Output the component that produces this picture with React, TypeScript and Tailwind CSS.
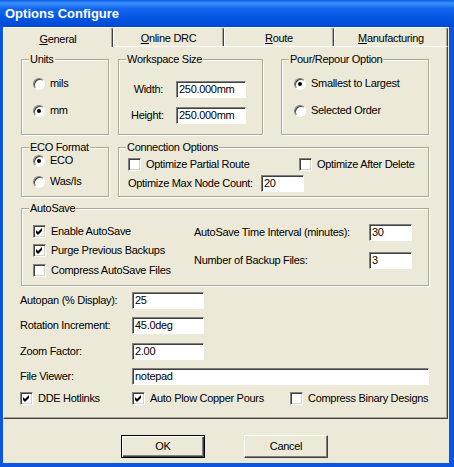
import type { ReactNode } from 'react';

const BG = 'bg-[#ECE9D8]';

function GroupBox({ label, className, inner, children }: { label: string; className: string; inner?: string; children?: ReactNode }) {
  return (
    <div className={`border border-[#aca899] shadow-[inset_1px_1px_0_#fff,1px_1px_0_#fff] ${className}`}>
      <span className={`-mt-[7px] ml-[7px] block w-fit px-[1px] leading-[13px] ${BG}`}>{label}</span>
      <div className={inner}>{children}</div>
    </div>
  );
}

function Radio({ checked }: { checked?: boolean }) {
  return (
    <span className="flex h-[12px] w-[12px] shrink-0 items-center justify-center rounded-full border border-b-[#fff] border-l-[#808080] border-r-[#fff] border-t-[#808080] bg-white shadow-[inset_1px_1px_0_#404040]">
      {checked && <span className="h-[4px] w-[4px] rounded-full bg-black" />}
    </span>
  );
}

function Check({ checked }: { checked?: boolean }) {
  return (
    <span className="flex h-[13px] w-[13px] shrink-0 items-center justify-center border border-b-white border-l-[#808080] border-r-white border-t-[#808080] bg-white shadow-[inset_1px_1px_0_#404040,inset_-1px_-1px_0_#d4d0c8]">
      {checked && (
        <svg width="7" height="7" viewBox="0 0 7 7">
          <path d="M0 2 L2 4 L6 0 L6 3 L2 7 L0 5 Z" fill="#000" />
        </svg>
      )}
    </span>
  );
}

function Field({ value, className }: { value: string; className: string }) {
  return (
    <div
      className={`flex h-[17px] items-center border border-b-white border-l-[#808080] border-r-white border-t-[#808080] bg-white pl-[2px] shadow-[inset_1px_1px_0_#404040] ${className}`}
    >
      {value}
    </div>
  );
}

function RadioRow({ label, checked, className }: { label: string; checked?: boolean; className: string }) {
  return (
    <div className={`flex h-[13px] items-center gap-[5px] ${className}`}>
      <Radio checked={checked} />
      <span>{label}</span>
    </div>
  );
}

function CheckRow({ label, checked, className }: { label: string; checked?: boolean; className?: string }) {
  return (
    <div className={`flex h-[13px] items-center gap-[5px] ${className ?? ''}`}>
      <Check checked={checked} />
      <span className="whitespace-nowrap">{label}</span>
    </div>
  );
}

function Tab({ label, rest, width, active }: { label: string; rest: string; width: string; active?: boolean }) {
  return (
    <div
      className={`flex items-center justify-center rounded-t-[3px] border-l border-r border-t border-l-white border-r-[#404040] border-t-white pt-[3px] shadow-[inset_-1px_0_0_#aca899] ${width} ${
        active ? `relative z-10 -mb-[1px] h-[20px] ${BG}` : `h-[19px] ${BG}`
      }`}
    >
      <span>
        <span className="underline">{label}</span>
        {rest}
      </span>
    </div>
  );
}

function Button({ label, primary }: { label: string; primary?: boolean }) {
  return (
    <div
      className={`flex h-[23px] w-[84px] items-center justify-center border ${BG} ${
        primary
          ? 'border-black shadow-[inset_1px_1px_0_#fff,inset_-1px_-1px_0_#404040,inset_-2px_-2px_0_#808080]'
          : 'border-b-[#404040] border-l-white border-r-[#404040] border-t-white shadow-[inset_-1px_-1px_0_#808080]'
      }`}
    >
      {label}
    </div>
  );
}

export default function App() {
  return (
    <div
      className="flex h-[467px] w-[454px] flex-col bg-[#0a56e3] text-[11px] tracking-[-0.3px] text-black"
      style={{ fontFamily: '"Liberation Sans", Arial, sans-serif' }}
    >
      {/* title bar */}
      <div className="flex h-[27px] shrink-0 items-center bg-[linear-gradient(to_bottom,#0b5ee6_0%,#3b8ff7_12%,#1468ee_30%,#0457e4_65%,#0049d2_100%)] pl-[5px] text-[13px] font-bold tracking-normal text-white">
        Options Configure
      </div>

      <div className={`mb-[4px] ml-[3px] mr-[5px] flex flex-1 flex-col ${BG}`}>
        {/* tabs */}
        <div className="flex">
          <Tab label="G" rest="eneral" width="w-[110px]" active />
          <Tab label="O" rest="nline DRC" width="w-[111px]" />
          <Tab label="R" rest="oute" width="w-[110px]" />
          <Tab label="M" rest="anufacturing" width="w-[114px]" />
        </div>

        {/* panel */}
        <div className="h-[373px] w-[445px] border border-b-[#404040] border-l-white border-r-[#404040] border-t-white pl-[17px] pt-[12px] shadow-[inset_-1px_-1px_0_#aca899]">
          {/* row 1 */}
          <div className="flex">
            <GroupBox label="Units" className="h-[76px] w-[88px]" inner="pl-[11px]">
              <RadioRow label="mils" className="mt-[11px]" />
              <RadioRow label="mm" checked className="mt-[14px]" />
            </GroupBox>
            <GroupBox label="Workspace Size" className="ml-[9px] h-[76px] w-[145px]" inner="pl-[12px]">
              <div className="mt-[15px] flex h-[17px] items-center">
                <span className="w-[32px] text-right">Width:</span>
                <Field value="250.000mm" className="ml-[13px] w-[70px]" />
              </div>
              <div className="mt-[9px] flex h-[17px] items-center">
                <span className="w-[32px] text-right">Height:</span>
                <Field value="250.000mm" className="ml-[13px] w-[70px]" />
              </div>
            </GroupBox>
            <GroupBox label="Pour/Repour Option" className="ml-[18px] h-[76px] w-[148px]" inner="pl-[12px]">
              <RadioRow label="Smallest to Largest" checked className="mt-[11px]" />
              <RadioRow label="Selected Order" className="mt-[14px]" />
            </GroupBox>
          </div>

          {/* row 2 */}
          <div className="mt-[12px] flex">
            <GroupBox label="ECO Format" className="h-[50px] w-[88px]" inner="pl-[11px]">
              <RadioRow label="ECO" checked className="mt-0" />
              <RadioRow label="Was/Is" className="mt-[8px]" />
            </GroupBox>
            <GroupBox label="Connection Options" className="ml-[9px] h-[50px] w-[311px]" inner="pl-[9px]">
              <div className="mt-[4px] flex">
                <CheckRow label="Optimize Partial Route" className="w-[171px]" />
                <CheckRow label="Optimize After Delete" />
              </div>
              <div className="mt-[4px] flex h-[17px] items-center">
                <span className="w-[133px]">Optimize Max Node Count:</span>
                <Field value="20" className="w-[43px]" />
              </div>
            </GroupBox>
          </div>

          {/* row 3 */}
          <GroupBox label="AutoSave" className="mt-[11px] h-[78px] w-[408px]" inner="flex">
            <div className="w-[172px] pl-[11px]">
              <CheckRow label="Enable AutoSave" checked className="mt-[10px]" />
              <CheckRow label="Purge Previous Backups" checked className="mt-[6px]" />
              <CheckRow label="Compress AutoSave Files" className="mt-[7px]" />
            </div>
            <div>
              <div className="mt-[9px] flex h-[17px] items-center">
                <span className="w-[175px]">AutoSave Time Interval (minutes):</span>
                <Field value="30" className="w-[43px]" />
              </div>
              <div className="mt-[11px] flex h-[17px] items-center">
                <span className="w-[175px]">Number of Backup Files:</span>
                <Field value="3" className="w-[43px]" />
              </div>
            </div>
          </GroupBox>

          {/* general fields */}
          <div className="-ml-[1px] mt-[6px]">
            <div className="flex h-[17px] items-center">
              <span className="w-[112px]">Autopan (% Display):</span>
              <Field value="25" className="w-[72px]" />
            </div>
            <div className="mt-[8px] flex h-[17px] items-center">
              <span className="w-[112px]">Rotation Increment:</span>
              <Field value="45.0deg" className="w-[72px]" />
            </div>
            <div className="mt-[9px] flex h-[17px] items-center">
              <span className="w-[112px]">Zoom Factor:</span>
              <Field value="2.00" className="w-[72px]" />
            </div>
            <div className="mt-[8px] flex h-[17px] items-center">
              <span className="w-[112px]">File Viewer:</span>
              <Field value="notepad" className="w-[297px]" />
            </div>
            <div className="mt-[7px] flex">
              <CheckRow label="DDE Hotlinks" checked className="w-[112px]" />
              <CheckRow label="Auto Plow Copper Pours" checked className="w-[158px]" />
              <CheckRow label="Compress Binary Designs" />
            </div>
          </div>
        </div>

        {/* buttons */}
        <div className="mt-[16px] flex gap-[39px] pl-[118px]">
          <Button label="OK" primary />
          <Button label="Cancel" />
        </div>
      </div>
    </div>
  );
}
